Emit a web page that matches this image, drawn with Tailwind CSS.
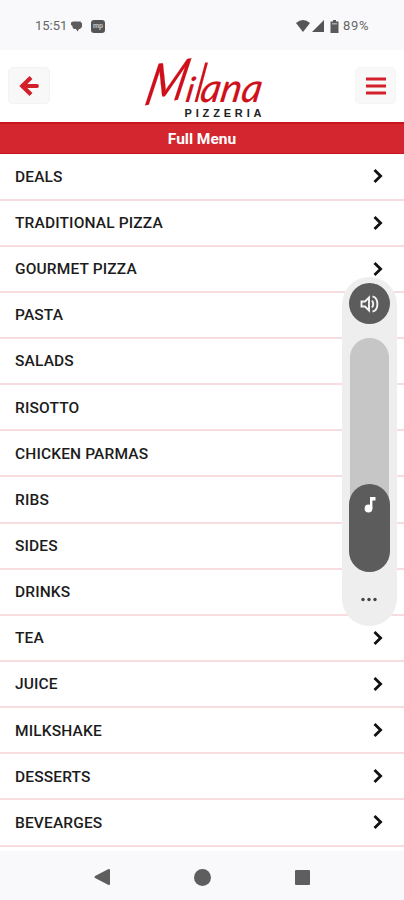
<!DOCTYPE html>
<html lang="en">
<head>
  <meta charset="UTF-8">
  <meta name="viewport" content="width=device-width, initial-scale=1.0">
  <title>Full Menu | Milana Pizzeria</title>
  <script src="https://cdn.jsdelivr.net/npm/@tailwindcss/browser@4"></script>
</head>
<body class="bg-white text-[#1c1c1c] font-['Roboto',sans-serif]">
  <div class="relative flex flex-col h-[900px] overflow-hidden">

    <!-- Status bar -->
    <div class="h-[50px] shrink-0 bg-[#f9f9fc] flex items-center justify-between pl-[35px] pr-[34px] pt-[2px] text-[#666] text-[13px]">
      <div class="flex items-center">
        <span class="w-[31px] whitespace-nowrap">15:51</span>
        <svg class="ml-[5px] w-[11px] h-[11px]" viewBox="0 0 11 11" fill="#5c5c5c"><path d="M2 .5h7.500l1.500 2v3.500L9 8H8L6.500 10.500 5 8H3L1.500 6.500V5L0 4V1.500z"/></svg>
        <span class="ml-[9px] w-[14px] h-[13px] rounded-[3px] bg-[#555] text-[#c4c4c4] text-[7px] font-bold flex items-center justify-center">mp</span>
      </div>
      <div class="flex items-center">
        <svg class="w-[14px] h-[12px]" viewBox="0 0 14 12" fill="#555"><path d="M0 3Q7-3 14 3L7 12z"/></svg>
        <svg class="ml-[2px] w-[12px] h-[12px]" viewBox="0 0 12 12" fill="#555"><path d="M12 0v12H0z"/></svg>
        <svg class="ml-[6px] w-[9px] h-[13px]" viewBox="0 0 9 13"><path d="M3 0h3v1.500h2.500V13h-8V1.500H3z" fill="#5a5a5a"/><path d="M2 3h5v1.500H2z" fill="#aaa"/></svg>
        <span class="ml-[4px] w-[27px] whitespace-nowrap tracking-[0.7px]">89%</span>
      </div>
    </div>

    <!-- Header -->
    <header class="h-[72px] shrink-0 flex items-start justify-between px-[8px]">
      <button class="mt-[17px] w-[42px] h-[37px] rounded-[5px] bg-[#f8f8f8] border border-[#f3f3f3] flex items-center justify-center">
        <svg class="w-[20px] h-[20px]" viewBox="0 0 20 20" fill="none" stroke="#d3212b" stroke-width="4.200"><path d="M12 1.500L3.300 10l8.700 8.500"/><path d="M4 10h14" stroke-linecap="round" stroke-width="3.800"/></svg>
      </button>
      <svg class="mt-[2px] w-[124px] h-[68px] overflow-visible" viewBox="0 0 124 68">
        <g fill="#cf101b" stroke="#cf101b" font-family="Lato" font-weight="400" stroke-width=".2">
          <text transform="matrix(.93 -.16 -.38 1.16 0 54)" font-size="50" textLength="44" lengthAdjust="spacingAndGlyphs">M</text>
          <text transform="translate(42 50) skewX(-16)" font-size="35">i</text>
          <text transform="translate(49 50) skewX(-15)" font-size="54" font-weight="300">l</text>
          <text transform="translate(58 50) skewX(-10)" font-size="40" textLength="61" lengthAdjust="spacingAndGlyphs" font-style="italic">ana</text>
        </g>
        <text x="43.500" y="65" font-family="Liberation Sans" font-weight="700" font-size="11" fill="#222" textLength="77">PIZZERIA</text>
      </svg>
      <button class="mt-[17px] w-[41px] h-[37px] rounded-[5px] bg-[#f8f8f8] border border-[#f5f5f5] flex items-center justify-center">
        <svg class="w-[20px] h-[18px]" viewBox="0 0 20 18" fill="none" stroke="#d3212b" stroke-width="2.800"><path d="M0 2h20M0 9h20M0 16h20"/></svg>
      </button>
    </header>

    <h1 class="h-[32px] shrink-0 bg-[#d3262e] border-t-2 border-b border-[#cb141c] flex items-center justify-center pt-[2px] text-white text-[15.5px] font-bold">Full Menu</h1>

    <ul id="menu-list" class="grow min-h-0 overflow-hidden pt-[0.4px]"></ul>

    <!-- Navigation bar -->
    <nav class="h-[49px] shrink-0 bg-[#f9f9fc] flex items-center justify-between px-[94px] pt-[3px]">
      <svg class="w-[16px] h-[18px]" viewBox="0 0 16 18"><path d="M15 2v14L1.500 9z" fill="#5e5e5e" stroke="#5e5e5e" stroke-width="2" stroke-linejoin="round"/></svg>
      <span class="w-[17px] h-[17px] rounded-full bg-[#5e5e5e]"></span>
      <span class="w-[15px] h-[15px] rounded-[1px] bg-[#5e5e5e]"></span>
    </nav>

    <!-- Volume panel -->
    <div class="absolute left-[342px] top-[277px] w-[55px] h-[349px] rounded-[28px] bg-[#eeeeee] flex flex-col items-center pt-[6px]">
      <div class="w-[41px] h-[41px] shrink-0 rounded-full bg-[#5c5c5c] flex items-center justify-center">
        <svg class="w-[20px] h-[18px]" viewBox="0 0 20 18" fill="none" stroke="#f4f4f4" stroke-width="1.900"><path d="M1.500 6.500h3.500l4-4v13l-4-4H1.500zM12 5.500q2.500 3.500 0 7M12.500 1.300c6.500 1.700 6.500 13.700 0 15.400"/></svg>
      </div>
      <div class="mt-[14px] w-[39px] h-[234px] shrink-0 rounded-[20px] bg-[#c6c6c6] flex flex-col items-center justify-end">
        <div class="w-[41px] h-[88px] shrink-0 rounded-[21px] bg-[#5c5c5c] flex justify-center pt-[12px]">
          <svg class="w-[12px] h-[17px]" viewBox="0 0 12 17" fill="#fff"><circle cx="4.500" cy="12.500" r="3.900"/><path d="M6 1h5.500v3.500H8.400v8H6z"/></svg>
        </div>
      </div>
      <svg class="mt-[25px] mr-[1px] w-[16px] h-[5px]" viewBox="0 0 16 5" fill="#444"><circle cx="2" cy="2.500" r="1.700"/><circle cx="8" cy="2.500" r="1.700"/><circle cx="14" cy="2.500" r="1.700"/></svg>
    </div>
  </div>

  <script>
    const items = ['DEALS', 'TRADITIONAL PIZZA', 'GOURMET PIZZA', 'PASTA', 'SALADS', 'RISOTTO', 'CHICKEN PARMAS', 'RIBS', 'SIDES', 'DRINKS', 'TEA', 'JUICE', 'MILKSHAKE', 'DESSERTS', 'BEVEARGES'];
    const list = document.getElementById('menu-list');
    items.forEach(name => {
      list.innerHTML += `
        <li class="h-[46.15px] border-b-2 border-[#f8dde0] flex items-center justify-between pl-[15px] pr-[21px] text-[15.5px] font-medium tracking-[0.15px]">
          <span class="pt-[2px]">${name}</span>
          <svg class="w-[10px] h-[14px]" viewBox="0 0 10 14" fill="none" stroke="#111" stroke-width="2.800"><path d="M1.500 1L7.600 7l-6.100 6"/></svg>
        </li>
      `;
    });
  </script>
</body>
</html>
